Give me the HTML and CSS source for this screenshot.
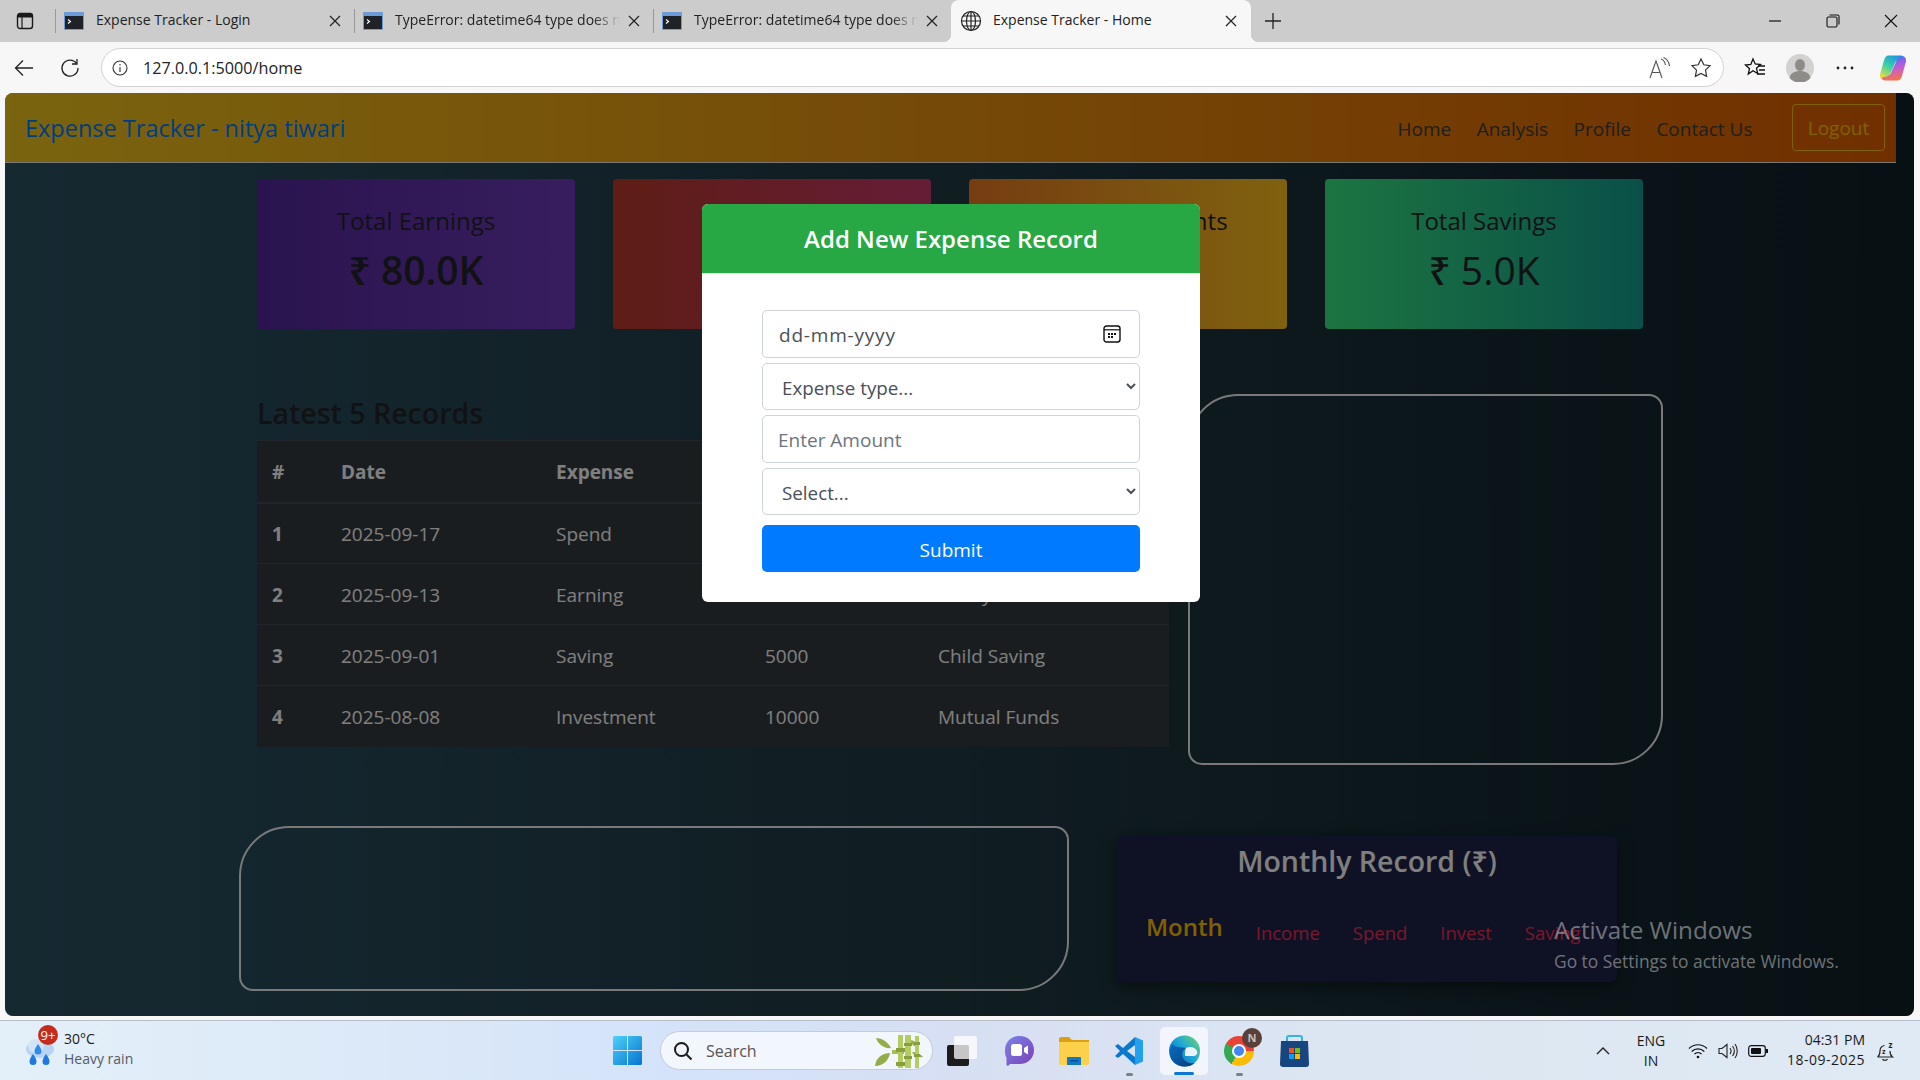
FILE: index.html
```html
<!DOCTYPE html>
<html lang="en">
<head>
    <meta charset="UTF-8">
    <title>Expense Tracker - Home</title>
    <link rel="stylesheet" href="styles.css">
</head>
<body>
<div class="screen">

    <!-- browser tabs -->
    <div class="tabstrip">
        <div class="side_btn">
            <svg width="18" height="18" viewBox="0 0 18 18"><rect x="1.5" y="1.5" width="15" height="15" rx="2.5" fill="none" stroke="#1a1a1a" stroke-width="1.4"/><path d="M2 2h14v3.5H2z" fill="#1a1a1a"/><path d="M6 5v11" stroke="#1a1a1a" stroke-width="1.2"/></svg>
        </div>
        <div class="tab">
            <span class="tab_sep"></span>
            <svg class="tab_icon" viewBox="0 0 20 20"><rect y="1" width="20" height="18" rx="1" fill="#6b9bd6"/><rect x="1" y="5" width="18" height="13" fill="#1f2328"/><path d="M4 8.500l2.500 2-2.500 2" fill="none" stroke="#fff" stroke-width="1.100"/></svg>
            <span class="tab_title">Expense Tracker - Login</span>
            <svg class="tab_close" viewBox="0 0 12 12"><path d="M1 1l10 10M11 1L1 11" stroke="#222" stroke-width="1.200"/></svg>
        </div>
        <div class="tab">
            <span class="tab_sep"></span>
            <svg class="tab_icon" viewBox="0 0 20 20"><rect y="1" width="20" height="18" rx="1" fill="#6b9bd6"/><rect x="1" y="5" width="18" height="13" fill="#1f2328"/><path d="M4 8.500l2.500 2-2.500 2" fill="none" stroke="#fff" stroke-width="1.100"/></svg>
            <span class="tab_title tab_title_fade">TypeError: datetime64 type does not support</span>
            <svg class="tab_close" viewBox="0 0 12 12"><path d="M1 1l10 10M11 1L1 11" stroke="#222" stroke-width="1.200"/></svg>
        </div>
        <div class="tab tab_narrow">
            <span class="tab_sep"></span>
            <svg class="tab_icon" viewBox="0 0 20 20"><rect y="1" width="20" height="18" rx="1" fill="#6b9bd6"/><rect x="1" y="5" width="18" height="13" fill="#1f2328"/><path d="M4 8.500l2.500 2-2.500 2" fill="none" stroke="#fff" stroke-width="1.100"/></svg>
            <span class="tab_title tab_title_fade">TypeError: datetime64 type does not support</span>
            <svg class="tab_close" viewBox="0 0 12 12"><path d="M1 1l10 10M11 1L1 11" stroke="#222" stroke-width="1.200"/></svg>
        </div>
        <div class="tab tab_active">
            <svg class="tab_globe" viewBox="0 0 22 22" fill="none" stroke="#222" stroke-width="1.200"><circle cx="11" cy="11" r="9.500"/><ellipse cx="11" cy="11" rx="4.500" ry="9.500"/><path d="M11 1.500v19M1.500 11h19M3 6h16M3 16h16"/></svg>
            <span class="tab_title">Expense Tracker - Home</span>
            <svg class="tab_close" viewBox="0 0 12 12"><path d="M1 1l10 10M11 1L1 11" stroke="#222" stroke-width="1.200"/></svg>
        </div>
        <div class="tab_new">
            <svg width="18" height="18" viewBox="0 0 18 18"><path d="M9 1v16M1 9h16" stroke="#222" stroke-width="1.300"/></svg>
        </div>
        <div class="win_btns">
            <div class="win_btn"><svg width="14" height="14" viewBox="0 0 14 14"><path d="M1 7h12" stroke="#111" stroke-width="1.200"/></svg></div>
            <div class="win_btn"><svg width="14" height="14" viewBox="0 0 14 14" fill="none" stroke="#111" stroke-width="1.100"><rect x="1" y="3" width="10" height="10" rx="1.500"/><path d="M3.500 1H11.500A1.500 1.500 0 0 1 13 2.500V10.500"/></svg></div>
            <div class="win_btn"><svg width="14" height="14" viewBox="0 0 14 14"><path d="M1 1l12 12M13 1L1 13" stroke="#111" stroke-width="1.100"/></svg></div>
        </div>
    </div>

    <!-- address bar -->
    <div class="toolbar">
        <div class="tool_btn"><svg width="20" height="18" viewBox="0 0 20 18" fill="none" stroke="#222" stroke-width="1.300"><path d="M19 9H1.500M9 1.500L1.500 9 9 16.500"/></svg></div>
        <div class="tool_btn"><svg width="20" height="20" viewBox="0 0 20 20" fill="none" stroke="#222" stroke-width="1.300"><path d="M16.500 5.500A8 8 0 1 0 18 10"/><path d="M17 1v5h-5"/></svg></div>
        <div class="address">
            <svg class="address_info" viewBox="0 0 16 16" fill="none" stroke="#333" stroke-width="1.100"><circle cx="8" cy="8" r="7"/><path d="M8 7v5M8 4v1.500"/></svg>
            <span class="address_url">127.0.0.1:5000/home</span>
            <div class="address_btn"><svg width="24" height="22" viewBox="0 0 24 22" fill="none" stroke="#555" stroke-width="1.100"><path d="M1 21L7 4l6 17M3 15.500h8"/><path d="M12 2c2.500 1 4 3 4.500 6M14.500 0.500c3.500 1.500 5.500 4.500 6 8.500"/></svg></div>
            <div class="address_btn"><svg width="22" height="22" viewBox="0 0 22 22" fill="none" stroke="#333" stroke-width="1.200"><path d="M11 2l2.800 5.800 6.200.9-4.500 4.400 1.100 6.300L11 16.400l-5.600 3 1.100-6.300L2 8.700l6.200-.9z"/></svg></div>
        </div>
        <div class="tool_btn tool_btn_right"><svg width="22" height="22" viewBox="0 0 22 22" fill="none" stroke="#111" stroke-width="1.300"><path d="M9 2l2.200 5 5.300.6-4 3.600 1.200 5.300L9 13.800 4.300 17l1.200-5.300-4-3.600 5.300-.6z"/><path d="M14 9h7M15 13h6M13 17h8"/></svg></div>
        <div class="tool_btn tool_btn_right"><svg width="28" height="28" viewBox="0 0 28 28"><circle cx="14" cy="14" r="14" fill="#d3d2d0"/><ellipse cx="14" cy="11" rx="5" ry="6" fill="#8e8c89"/><path d="M3.500 24c1-5 5-7 10.500-7s9.500 2 10.500 7a14 14 0 0 1-21 0z" fill="#8e8c89"/></svg></div>
        <div class="tool_btn tool_btn_right"><svg width="18" height="4" viewBox="0 0 18 4" fill="#222"><circle cx="2" cy="2" r="1.400"/><circle cx="9" cy="2" r="1.400"/><circle cx="16" cy="2" r="1.400"/></svg></div>
        <div class="tool_btn tool_btn_copilot">
            <svg width="28" height="28" viewBox="0 0 28 28">
                <defs>
                    <linearGradient id="cop_a" x1="0.800" y1="0" x2="0.200" y2="1"><stop offset="0" stop-color="#1a8fe8"/><stop offset="0.550" stop-color="#3dd6a0"/><stop offset="1" stop-color="#f4d83a"/></linearGradient>
                    <linearGradient id="cop_b" x1="0.400" y1="0" x2="0.600" y2="1"><stop offset="0" stop-color="#4c6df0"/><stop offset="0.500" stop-color="#c45bd8"/><stop offset="1" stop-color="#f9743c"/></linearGradient>
                </defs>
                <path d="M9 1.500H22c2 0 3 1 3 2.500 0 1-2 .5-5 1.500-3 1-4 3-5 6L11 20c-1 3-3 5.500-6.500 5.500C2 25.500.5 23.500 1 20.500L4.500 8C5.500 4 7 1.500 9 1.500z" fill="url(#cop_a)"/>
                <path d="M19 26.500H6c-2 0-3-1-3-2.500 0-1 2-.5 5-1.500 3-1 4-3 5-6L17 8c1-3 3-5.500 6.500-5.500 2.500 0 4 2 3.500 5L23.500 20c-1 4-2.500 6.500-4.500 6.500z" fill="url(#cop_b)"/>
            </svg>
        </div>
    </div>

    <!-- the page in the browser -->
    <div class="viewport">
        <div class="page">
            <div class="nav">
                <span class="nav_brand">Expense Tracker - nitya tiwari</span>
                <div class="nav_links">
                    <a href="#">Home</a>
                    <a href="#">Analysis</a>
                    <a href="#">Profile</a>
                    <a href="#">Contact Us</a>
                    <a href="#" class="nav_logout">Logout</a>
                </div>
            </div>

            <div class="cards">
                <div class="card card_purple">
                    <div class="card_label">Total Earnings</div>
                    <div class="card_value">₹ 80.0K</div>
                </div>
                <div class="card card_red"></div>
                <div class="card card_orange">
                    <div class="card_label">Total Investments</div>
                </div>
                <div class="card card_green">
                    <div class="card_label">Total Savings</div>
                    <div class="card_value">₹ 5.0K</div>
                </div>
            </div>

            <div class="records">
                <div class="records_left">
                    <h2 class="records_title">Latest 5 Records</h2>
                    <table class="records_table">
                        <colgroup>
                            <col class="col_num"><col class="col_date"><col class="col_type"><col class="col_amount"><col class="col_note">
                        </colgroup>
                        <thead>
                            <tr><th>#</th><th>Date</th><th>Expense</th><th></th><th></th></tr>
                        </thead>
                        <tbody>
                            <tr><th>1</th><td>2025-09-17</td><td>Spend</td><td></td><td></td></tr>
                            <tr><th>2</th><td>2025-09-13</td><td>Earning</td><td></td><td>Salary</td></tr>
                            <tr><th>3</th><td>2025-09-01</td><td>Saving</td><td>5000</td><td>Child Saving</td></tr>
                            <tr><th>4</th><td>2025-08-08</td><td>Investment</td><td>10000</td><td>Mutual Funds</td></tr>
                        </tbody>
                    </table>
                </div>
                <div class="chart_box chart_box_pie"></div>
            </div>

            <div class="bottom">
                <div class="chart_box chart_box_line"></div>
                <div class="monthly">
                    <div class="monthly_title">Monthly Record (₹)</div>
                    <div class="monthly_head">
                        <span class="monthly_month">Month</span>
                        <span>Income</span>
                        <span>Spend</span>
                        <span>Invest</span>
                        <span>Saving</span>
                    </div>
                </div>
            </div>
        </div>

        <!-- modal with dim layer -->
        <div class="overlay">
            <div class="modal">
                <div class="modal_head">Add New Expense Record</div>
                <form class="modal_body">
                    <div class="field field_date">
                        <span>dd-mm-yyyy</span>
                        <svg width="18" height="18" viewBox="0 0 18 18"><rect x="1" y="1" width="16" height="16" rx="2.500" fill="none" stroke="#111" stroke-width="1.400"/><path d="M1 4.800h16" stroke="#111" stroke-width="1.200"/><path d="M5 8h2v2H5zM8 8h2v2H8zM11 8h2v2h-2zM5 11h2v2H5zM8 11h2v2H8z" fill="#111"/></svg>
                    </div>
                    <select class="field field_select"><option>Expense type...</option></select>
                    <input class="field field_input" type="text" placeholder="Enter Amount">
                    <select class="field field_select"><option>Select...</option></select>
                    <button class="submit_btn" type="button">Submit</button>
                </form>
            </div>
        </div>

        <div class="activate">
            <div class="activate_title">Activate Windows</div>
            <div class="activate_sub">Go to Settings to activate Windows.</div>
        </div>
    </div>

    <!-- windows taskbar -->
    <div class="taskbar">
        <div class="weather">
            <div class="weather_icon">
                <svg width="30" height="34" viewBox="0 0 30 34">
                    <ellipse cx="15" cy="15" rx="14" ry="9" fill="#b9d4f2"/>
                    <ellipse cx="11" cy="12" rx="8" ry="7" fill="#d3e4f7"/>
                    <path d="M13 10c2 3 3.500 5 3.500 7a3.500 3.500 0 0 1-7 0c0-2 1.500-4 3.500-7z" fill="#2f8ae8"/>
                    <path d="M8 20c2 3 3.500 5 3.500 7.500a3.500 3.500 0 0 1-7 0C4.500 25 6 23 8 20z" fill="#1f7ae0"/>
                    <path d="M21 20c2 3 3.500 5 3.500 7.500a3.500 3.500 0 0 1-7 0c0-2.500 1.500-4.500 3.500-7.500z" fill="#1f7ae0"/>
                </svg>
                <span class="weather_badge">9+</span>
            </div>
            <div class="weather_text">
                <div class="weather_temp">30°C</div>
                <div class="weather_desc">Heavy rain</div>
            </div>
        </div>
        <svg class="win_logo" viewBox="0 0 29 29">
            <defs><linearGradient id="win_g" x1="0" y1="0" x2="1" y2="1"><stop offset="0" stop-color="#4fd0fa"/><stop offset="1" stop-color="#0673d0"/></linearGradient></defs>
            <path d="M0 1.500A1.500 1.500 0 0 1 1.500 0H14v14H0zM15 0h12.500A1.500 1.500 0 0 1 29 1.500V14H15zM0 15h14v14H1.500A1.500 1.500 0 0 1 0 27.500zM15 15h14v12.500a1.500 1.500 0 0 1-1.500 1.500H15z" fill="url(#win_g)"/>
        </svg>
        <div class="search">
            <svg width="20" height="20" viewBox="0 0 20 20" fill="none" stroke="#1a1a1a" stroke-width="2"><circle cx="8.500" cy="8.500" r="6.500"/><path d="M13.500 13.500L18.500 18.500"/></svg>
            <span class="search_text">Search</span>
            <svg class="search_art" width="50" height="34" viewBox="0 0 50 34">
                <path d="M2 4c6 0 12 4 15 10-7 1-13-4-15-10zM1 32c1-8 7-13 15-13-1 7-7 13-15 13zM36 6c4 0 7 3 8 7-4 0-7-3-8-7zM38 18c4 0 9 2 11 5-5 1-9-1-11-5z" fill="#93ad4a"/>
                <path d="M18 16h12v4H18z" fill="#a6bf55"/>
                <path d="M24 1h5v33h-5zM31 1h6v33h-6zM41 2h4v32h-4z" fill="#b4cc64"/>
                <path d="M22 14h9v4h-9zM22 28h9v4h-9zM30 9h8v3h-8zM30 22h8v3h-8zM40 8h6v3h-6zM40 20h6v3h-6z" fill="#86a03c"/>
            </svg>
        </div>
        <div class="apps">
            <div class="app app_first">
                <svg width="30" height="30" viewBox="0 0 30 30"><rect x="0" y="9" width="22" height="21" rx="2" fill="#1c1c1c"/><rect x="7" y="0" width="23" height="23" rx="2" fill="#fff" fill-opacity="0.750"/></svg>
            </div>
            <div class="app">
                <svg width="29" height="30" viewBox="0 0 29 30">
                    <defs><linearGradient id="meet_g" x1="0" y1="0" x2="1" y2="1"><stop offset="0" stop-color="#7b83eb"/><stop offset="1" stop-color="#7a3fb5"/></linearGradient></defs>
                    <path d="M14.500 0C23 0 29 6 29 14s-6 14-14.500 14H5l-2 2c-1 0-1.500-1-1.500-2V22C0 19 0 16 0 14 0 6 6 0 14.500 0z" fill="url(#meet_g)"/>
                    <rect x="6" y="8" width="11" height="12" rx="2.500" fill="#fff"/><path d="M19 12l4-2.500v9L19 16z" fill="#fff"/>
                </svg>
            </div>
            <div class="app">
                <svg width="30" height="28" viewBox="0 0 30 28"><path d="M0 2a2 2 0 0 1 2-2h8l3 3h17v6H0z" fill="#dd9f12"/><path d="M0 5h30v21a2 2 0 0 1-2 2H2a2 2 0 0 1-2-2z" fill="#fbd14b"/><path d="M9 20h12a1 1 0 0 1 1 1v7H8v-7a1 1 0 0 1 1-1z" fill="#0f78c8"/><path d="M11 23h8v1.500h-8z" fill="#0a4f8f"/></svg>
            </div>
            <div class="app app_dot">
                <svg width="30" height="30" viewBox="0 0 30 30"><path d="M21 1l8 3.500v21L21 29z" fill="#21a0ee"/><path d="M21 1L9 12 4 8 1 10l5 5-5 5 3 2 5-4 12 11v-8l-8-6 8-6z" fill="#0a78cb"/></svg>
            </div>
            <div class="app app_current">
                <svg width="31" height="32" viewBox="0 0 31 32">
                    <defs>
                        <linearGradient id="edge_a" x1="0.900" y1="0" x2="0.200" y2="0.600"><stop offset="0" stop-color="#6ad46f"/><stop offset="0.600" stop-color="#1ea8d8"/><stop offset="1" stop-color="#1280c8"/></linearGradient>
                        <linearGradient id="edge_b" x1="0" y1="0" x2="1" y2="1"><stop offset="0" stop-color="#0c6cc0"/><stop offset="1" stop-color="#083c7c"/></linearGradient>
                    </defs>
                    <circle cx="15.500" cy="16" r="15.500" fill="url(#edge_a)"/>
                    <path d="M3 9c-4 8-2 18 6 21 6 2.500 12 2 17-2-5 1-10-1-12-5-2-4 0-8 3-10-5-1-10 0-14-4z" fill="url(#edge_b)"/>
                    <path d="M17 13c4-2 9-1 11 3 1 3-1 5-4 5h-8c0-3 0-6 1-8z" fill="#eaf3fb"/>
                </svg>
            </div>
            <div class="app app_dot">
                <div class="chrome_logo"><span class="chrome_core"></span></div>
                <span class="chrome_badge">N</span>
            </div>
            <div class="app">
                <svg width="29" height="32" viewBox="0 0 29 32"><path d="M7 7V3a2 2 0 0 1 2-2h11a2 2 0 0 1 2 2v4" fill="none" stroke="#31b5e8" stroke-width="2"/><path d="M1 6h27l1 23a3 3 0 0 1-3 3H3a3 3 0 0 1-3-3z" fill="#17457f"/><path d="M9 13h5v5H9z" fill="#f25022"/><path d="M15 13h5v5h-5z" fill="#7fba00"/><path d="M9 19h5v5H9z" fill="#00a4ef"/><path d="M15 19h5v5h-5z" fill="#ffb900"/></svg>
            </div>
        </div>
        <div class="tray">
            <svg class="tray_chevron" width="14" height="8" viewBox="0 0 14 8" fill="none" stroke="#222" stroke-width="1.400"><path d="M1 7l6-6 6 6"/></svg>
            <div class="tray_lang"><div>ENG</div><div>IN</div></div>
            <svg class="tray_wifi" width="20" height="16" viewBox="0 0 20 16" fill="none" stroke="#111" stroke-width="1.200"><path d="M1 5.500c5-5 13-5 18 0M3.700 8.500c3.500-3.500 9-3.500 12.600 0M6.500 11c2-2 5-2 7 0"/><circle cx="10" cy="14" r="1.300" fill="#111" stroke="none"/></svg>
            <svg class="tray_sound" width="20" height="16" viewBox="0 0 20 16" fill="none" stroke="#222" stroke-width="1.100"><path d="M1 5.500h3L9 1.500v13l-5-4H1zM12 5c1.300 1.800 1.300 4.200 0 6M14.500 3c2.300 3 2.300 7 0 10M17 1c3 4 3 10 0 14"/></svg>
            <svg class="tray_battery" width="20" height="12" viewBox="0 0 20 12"><rect x="0.700" y="0.700" width="16.600" height="10.600" rx="2.500" fill="none" stroke="#111" stroke-width="1.200"/><rect x="3" y="3" width="10" height="6" rx="1" fill="#111"/><rect x="18" y="4" width="2" height="4" fill="#111"/></svg>
            <div class="tray_clock"><div>04:31 PM</div><div class="tray_date">18-09-2025</div></div>
            <svg class="tray_bell" width="20" height="22" viewBox="0 0 20 22" fill="none" stroke="#222" stroke-width="1.200"><path d="M1.500 17c1.500-1 2.500-2.500 2.500-6 0-3 2-5 4.500-5.500M14 11c0 3 1 5 2.500 6H1.500M6.500 19c.6 1.800 4 1.800 5 0"/><text x="6" y="14" font-size="7" fill="#222" stroke="none" font-family="Open Sans" font-weight="700">z</text><text x="12.500" y="8" font-size="8" fill="#222" stroke="none" font-family="Open Sans" font-weight="700">z</text></svg>
        </div>
    </div>
</div>
</body>
</html>
```
FILE: styles.css
```css
*{
    margin: 0;
    padding: 0;
    box-sizing: border-box;
}
body{
    font-family: "Open Sans", "Noto Sans", sans-serif;
    background: #f7f7f7;
    overflow: hidden;
}
.screen{
    width: 1920px;
    height: 1080px;
    display: flex;
    flex-direction: column;
}

/* tabs */
.tabstrip{
    height: 42px;
    background: #cccccc;
    display: flex;
    align-items: center;
    flex-shrink: 0;
}
.side_btn{
    width: 55px;
    padding-left: 16px;
    display: flex;
}
.tab{
    width: 299px;
    height: 42px;
    padding-right: 13px;
    display: flex;
    align-items: center;
    font-size: 14px;
    color: #222;
}
.tab_narrow{
    width: 298px;
}
.tab_sep{
    width: 1px;
    height: 24px;
    background: #9a9a9a;
    margin-right: 8px;
    flex-shrink: 0;
}
.tab_icon{
    width: 20px;
    height: 20px;
    margin-right: 12px;
    flex-shrink: 0;
}
.tab_globe{
    width: 22px;
    height: 22px;
    margin-right: 11px;
    flex-shrink: 0;
}
.tab_title{
    flex: 1;
    white-space: nowrap;
    overflow: hidden;
    margin-right: 8px;
    padding-bottom: 3px;
}
.tab_title_fade{
    -webkit-mask-image: linear-gradient(90deg, #000 88%, transparent 100%);
    mask-image: linear-gradient(90deg, #000 88%, transparent 100%);
}
.tab_close{
    width: 12px;
    height: 12px;
    flex-shrink: 0;
}
.tab_active{
    width: 300px;
    padding-left: 9px;
    padding-right: 14px;
    background: #f7f7f7;
    border-radius: 8px 8px 0 0;
    position: relative;
}
.tab_active:before,
.tab_active:after{
    content: "";
    position: absolute;
    bottom: 0;
    width: 8px;
    height: 8px;
}
.tab_active:before{
    left: -8px;
    background: radial-gradient(circle at 0 0, transparent 8px, #f7f7f7 8.500px);
}
.tab_active:after{
    right: -8px;
    background: radial-gradient(circle at 100% 0, transparent 8px, #f7f7f7 8.500px);
}
.tab_new{
    margin-left: 13px;
    display: flex;
}
.win_btns{
    margin-left: auto;
    display: flex;
}
.win_btn{
    width: 58px;
    height: 42px;
    display: flex;
    align-items: center;
    justify-content: center;
}

/* address bar */
.toolbar{
    height: 51px;
    padding: 6px 1px 6px 1px;
    display: flex;
    align-items: center;
    flex-shrink: 0;
}
.tool_btn{
    width: 46px;
    height: 39px;
    display: flex;
    align-items: center;
    justify-content: center;
    flex-shrink: 0;
}
.tool_btn_right{
    width: 45px;
}
.tool_btn_copilot{
    width: 52px;
}
.address{
    flex: 1;
    height: 39px;
    margin: 0 8px;
    padding: 0 2px 0 10px;
    background: #fff;
    border: 1.500px solid #d2d2d2;
    border-radius: 20px;
    display: flex;
    align-items: center;
}
.address_info{
    width: 16px;
    height: 16px;
    margin-right: 15px;
}
.address_url{
    flex: 1;
    font-size: 16.200px;
    color: #222;
}
.address_btn{
    width: 40px;
    display: flex;
    justify-content: center;
}

/* page */
.viewport{
    width: 1909px;
    height: 923px;
    margin-left: 5px;
    border-radius: 8px;
    overflow: hidden;
    position: relative;
    background: linear-gradient(90deg, #2c5364, #203a43, #0f2027);
    flex-shrink: 0;
}
.page{
    width: 1891px;
}
.nav{
    height: 70px;
    padding: 0 11px 0 20px;
    background: linear-gradient(90deg, #f4c81e, #e25f00);
    border-bottom: 1px solid #f0f0f0;
    display: flex;
    align-items: center;
    justify-content: space-between;
}
.nav_brand{
    font-size: 23.500px;
    color: #007bff;
}
.nav_links{
    display: flex;
    align-items: center;
}
.nav_links a{
    font-size: 19px;
    color: #3e3e38;
    text-decoration: none;
    margin-right: 25.500px;
    padding-top: 2px;
}
.nav_links a.nav_logout{
    margin: 0 0 0 14px;
    width: 93px;
    height: 47px;
    line-height: 43px;
    text-align: center;
    color: #ffc107;
    border: 1px solid #ffc107;
    border-radius: 4px;
}
.cards{
    margin: 16px 0 0 252px;
    display: grid;
    grid-template-columns: repeat(4, 318px);
    column-gap: 38px;
}
.card{
    height: 150px;
    padding-top: 24px;
    border-radius: 4px;
    text-align: center;
    color: #212529;
}
.card_label{
    font-size: 24px;
    line-height: 36px;
}
.card_value{
    font-size: 39px;
    line-height: 52px;
    font-weight: 600;
    margin-top: 5px;
}
.card_green .card_value{
    font-weight: 500;
}
.card_purple{
    background: linear-gradient(90deg, #54299e, #6f3bbd);
}
.card_red{
    background: linear-gradient(90deg, #bd3a2b, #cb3a6e);
}
.card_orange{
    background: linear-gradient(90deg, #ec7a24, #ffc41f);
}
.card_green{
    background: linear-gradient(90deg, #38ea82, #14a092);
}
.records{
    margin: 65px 0 0 252px;
    display: flex;
    align-items: flex-start;
    gap: 19px;
}
.records_left{
    width: 912px;
}
.records_title{
    font-size: 28.500px;
    line-height: 38px;
    font-weight: 600;
    color: #212529;
    margin-bottom: 8px;
}
.records_table{
    width: 912px;
    border-collapse: collapse;
    table-layout: fixed;
    background: #343a40;
    color: #fff;
    font-size: 19px;
}
.records_table th,
.records_table td{
    height: 61px;
    padding: 2px 15px 0;
    text-align: left;
    border-top: 1px solid #454d55;
}
.records_table thead th{
    height: 62px;
    border-bottom: 2px solid #454d55;
}
.col_num{
    width: 69px;
}
.col_date{
    width: 215px;
}
.col_type{
    width: 209px;
}
.col_amount{
    width: 173px;
}
.col_note{
    width: 246px;
}
.chart_box{
    border: 2px solid #f2f2f2;
    border-radius: 50px 14px 50px 14px;
}
.chart_box_pie{
    width: 475px;
    height: 371px;
}
.bottom{
    margin: 61px 0 0 234px;
    display: flex;
    align-items: flex-start;
    gap: 48px;
}
.chart_box_line{
    width: 830px;
    height: 165px;
    flex-shrink: 0;
}
.monthly{
    width: 500px;
    height: 146px;
    margin-top: 10px;
    padding-top: 5px;
    background: #1e2348;
    border-radius: 6px;
    box-shadow: 0 4px 16px rgba(0,0,0,0.5);
}
.monthly_title{
    font-size: 28.500px;
    line-height: 40px;
    font-weight: 600;
    color: #fff;
    text-align: center;
}
.monthly_head{
    margin-top: 28px;
    padding-left: 29px;
    display: flex;
    align-items: flex-end;
    gap: 33px;
    font-size: 18.500px;
    line-height: 30px;
    color: #f23059;
}
.monthly_month{
    font-size: 24px;
    line-height: 36px;
    font-weight: 600;
    color: #ffc107;
    margin-bottom: 3px;
}

/* modal */
.overlay{
    position: absolute;
    inset: 0;
    background: rgba(0,0,0,0.5);
}
.modal{
    position: absolute;
    left: 697px;
    top: 111px;
    width: 498px;
    height: 398px;
    background: #fff;
    border-radius: 6px;
    overflow: hidden;
}
.modal_head{
    height: 70px;
    line-height: 70px;
    background: #28a745;
    color: #fff;
    font-size: 24px;
    font-weight: 600;
    text-align: center;
    border-bottom: 1px solid #dee2e6;
}
.modal_body{
    padding: 36px 60px 0;
    display: flex;
    flex-direction: column;
}
.field{
    width: 378px;
    height: 48px;
    margin-bottom: 5px;
    border: 1px solid #ced4da;
    border-radius: 5px;
    background: #fff;
    font-family: inherit;
    font-size: 19px;
    color: #495057;
}
.field_date{
    padding: 2px 18px 0 16px;
    letter-spacing: 0.800px;
    display: flex;
    align-items: center;
    justify-content: space-between;
}
.field_date svg{
    margin-top: -2px;
}
.field_select{
    height: 47px;
    padding: 2px 0 0 15px;
    font-size: 18.800px;
}
.field_input{
    padding: 2px 0 0 15px;
}
.field_input::placeholder{
    color: #6c757d;
    opacity: 1;
}
.submit_btn{
    width: 378px;
    height: 47px;
    margin-top: 5px;
    padding-top: 2px;
    border: none;
    border-radius: 5px;
    background: #007bff;
    color: #fff;
    font-family: inherit;
    font-size: 19px;
    font-weight: 500;
}

/* activation watermark */
.activate{
    position: absolute;
    left: 1549px;
    top: 821px;
    color: rgba(255,255,255,0.42);
}
.activate_title{
    font-size: 24.200px;
    line-height: 32px;
}
.activate_sub{
    font-size: 17.400px;
    line-height: 26px;
    margin-top: 2px;
}

/* taskbar */
.taskbar{
    height: 60px;
    margin-top: 4px;
    padding: 0 24px 0 25px;
    background: linear-gradient(90deg, #e4f0f8, #d4e3f9 35%, #d7dff3 50%, #dce6f2 70%, #dfeaf4);
    border-top: 1px solid #b6bec9;
    display: flex;
    align-items: center;
    flex-shrink: 0;
}
.weather{
    width: 588px;
    display: flex;
    align-items: center;
    gap: 9px;
}
.weather_icon{
    width: 30px;
    height: 34px;
    position: relative;
}
.weather_badge{
    position: absolute;
    left: 13px;
    top: -9px;
    width: 20px;
    height: 20px;
    line-height: 20px;
    border-radius: 50%;
    background: #c42b1c;
    color: #fff;
    font-size: 13px;
    text-align: center;
}
.weather_text{
    font-size: 14px;
    line-height: 20px;
    padding-bottom: 3px;
}
.weather_temp{
    color: #1a1a1a;
}
.weather_desc{
    color: #555b63;
}
.win_logo{
    width: 29px;
    height: 29px;
    margin-right: 18px;
}
.search{
    width: 273px;
    height: 39px;
    padding: 0 8px 0 12px;
    background: #f2f6fd;
    border: 1px solid #c4ccd9;
    border-radius: 20px;
    display: flex;
    align-items: center;
    gap: 13px;
}
.search_text{
    flex: 1;
    font-size: 16px;
    color: #555;
}
.apps{
    margin-left: 3.500px;
    display: flex;
}
.app{
    width: 48px;
    height: 48px;
    margin: 0 3.500px;
    border-radius: 5px;
    display: flex;
    align-items: center;
    justify-content: center;
    position: relative;
}
.app_first svg{
    margin-right: 5px;
}
.app_dot:after{
    content: "";
    position: absolute;
    bottom: -1px;
    left: 21px;
    width: 7px;
    height: 3px;
    border-radius: 2px;
    background: #7b7f86;
}
.app_current{
    background: rgba(255,255,255,0.65);
}
.app_current:after{
    content: "";
    position: absolute;
    bottom: 0;
    left: 14px;
    width: 20px;
    height: 3px;
    border-radius: 2px;
    background: #0a78d4;
}
.chrome_logo{
    width: 30px;
    height: 30px;
    border-radius: 50%;
    background: conic-gradient(#ea4335 0 90deg, #fbbc05 90deg 210deg, #34a853 210deg 300deg, #ea4335 300deg);
    display: flex;
    align-items: center;
    justify-content: center;
}
.chrome_core{
    width: 14px;
    height: 14px;
    border-radius: 50%;
    background: #4285f4;
    border: 2px solid #fff;
}
.chrome_badge{
    position: absolute;
    left: 27px;
    top: 1px;
    width: 20px;
    height: 20px;
    line-height: 20px;
    border-radius: 50%;
    background: #5a4038;
    color: #c9bdb6;
    font-size: 11px;
    font-weight: 700;
    text-align: center;
}
.tray{
    margin-left: auto;
    display: flex;
    align-items: center;
    color: #1a1a1a;
}
.tray_lang{
    width: 30px;
    margin-left: 26px;
    font-size: 14px;
    line-height: 20px;
    text-align: center;
}
.tray_wifi{
    margin-left: 22px;
}
.tray_sound,
.tray_battery{
    margin-left: 10px;
}
.tray_clock{
    width: 78px;
    margin-left: 19px;
    font-size: 14px;
    line-height: 20px;
    text-align: right;
    white-space: nowrap;
    display: flex;
    flex-direction: column;
    align-items: flex-end;
    padding-bottom: 1px;
}
.tray_date{
    letter-spacing: 0.500px;
}
.tray_bell{
    margin-left: 11px;
}
```
